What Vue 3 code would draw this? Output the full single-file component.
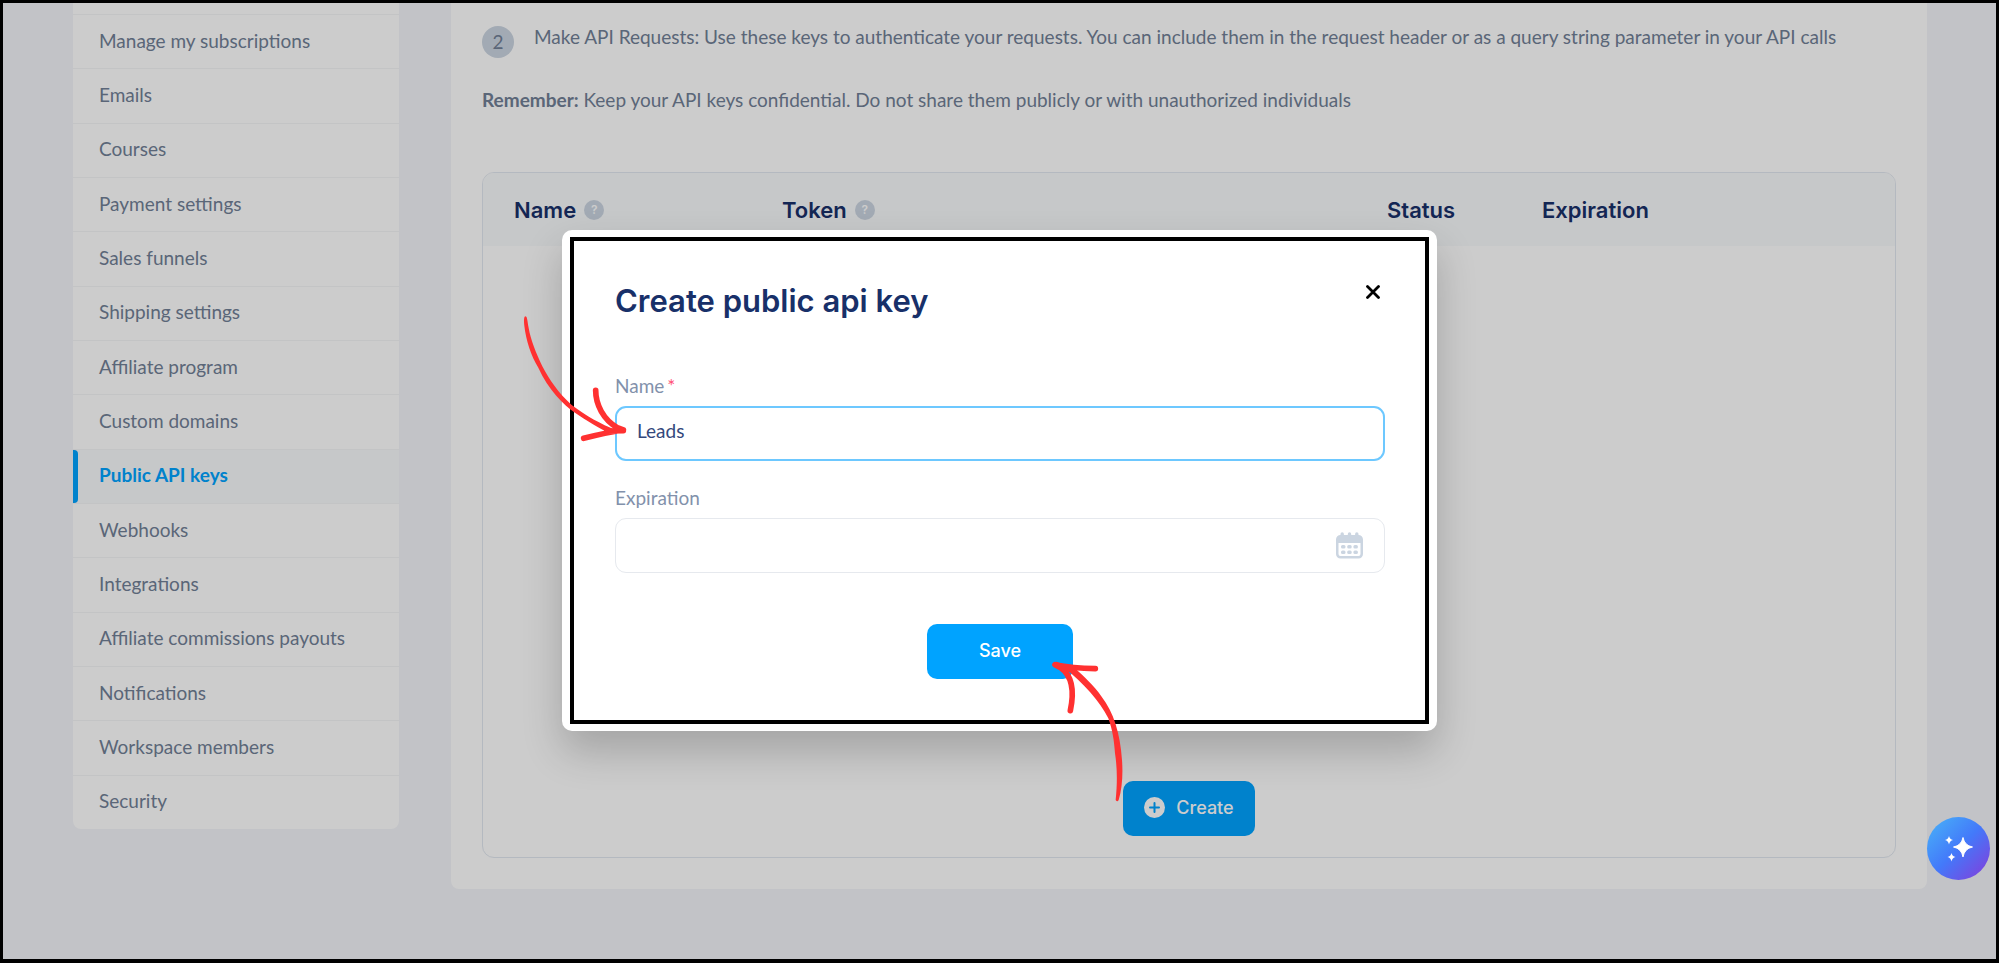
<template>
  <div class="page">
    <div class="layout">
      <nav class="sidebar" aria-label="Settings">
        <div class="sidebar-top"></div>
        <a
          v-for="item in menu"
          :key="item"
          href="#"
          class="sidebar-link"
          :class="{ active: item === current }"
          @click.prevent="current = item"
        >{{ item }}</a>
      </nav>

      <main class="panel">
        <div class="step">
          <span class="step-number">2</span>
          <p>Make API Requests: Use these keys to authenticate your requests. You can include them in the request header or as a query string parameter in your API calls</p>
        </div>
        <p class="remember"><strong>Remember:</strong> Keep your API keys confidential. Do not share them publicly or with unauthorized individuals</p>

        <div class="keys">
          <table class="keys-table">
            <thead>
              <tr>
                <th v-for="col in columns" :key="col.label" :class="col.class">
                  <span class="th-inner">
                    {{ col.label }}
                    <span v-if="col.help" class="help">?</span>
                  </span>
                </th>
              </tr>
            </thead>
          </table>
          <div class="keys-empty"></div>
          <button type="button" class="btn btn-create" @click="open = true">
            <svg width="21" height="21" viewBox="0 0 21 21">
              <circle cx="10.5" cy="10.5" r="10.5" fill="#fff" />
              <path d="M10.5 6v9M6 10.5h9" stroke="#00a3ff" stroke-width="2" stroke-linecap="round" />
            </svg>
            Create
          </button>
        </div>
      </main>
    </div>

    <div v-if="open" class="overlay">
      <form class="modal" role="dialog" aria-labelledby="modal-title" @submit.prevent="open = false">
        <div class="modal-body">
          <header class="modal-header">
            <h2 id="modal-title">Create public api key</h2>
            <button type="button" class="close" aria-label="Close" @click="open = false">
              <svg width="14" height="14" viewBox="0 0 14 14">
                <path d="M1.5 1.5l11 11M12.5 1.5l-11 11" stroke="#000" stroke-width="2.8" stroke-linecap="round" />
              </svg>
            </button>
          </header>

          <label for="key-name">Name<span class="required">*</span></label>
          <div class="field focused">
            <input id="key-name" v-model="name" type="text" />
          </div>

          <label for="key-expiration">Expiration</label>
          <div class="field">
            <input id="key-expiration" v-model="expiration" type="text" />
            <svg width="27" height="27" viewBox="0 0 27 27">
              <path
                fill="#cbd5e1"
                fill-rule="evenodd"
                d="M4.5 3V2a1.700 1.700 0 0 1 3.400 0v1h3.900V2a1.700 1.700 0 0 1 3.400 0v1h3.900V2a1.700 1.700 0 0 1 3.400 0v1A4.500 4.500 0 0 1 27 7.500V22a4.500 4.500 0 0 1-4.500 4.500h-18A4.500 4.500 0 0 1 0 22V7.500A4.500 4.500 0 0 1 4.500 3zM2.500 11v11a2 2 0 0 0 2 2h18a2 2 0 0 0 2-2V11z"
              />
              <g fill="#cbd5e1">
                <rect x="5" y="13" width="4.5" height="3.5" rx="1.5" />
                <rect x="11.2" y="13" width="4.5" height="3.5" rx="1.5" />
                <rect x="17.4" y="13" width="4.5" height="3.5" rx="1.5" />
                <rect x="5" y="18.5" width="4.5" height="3.5" rx="1.5" />
                <rect x="11.2" y="18.5" width="4.5" height="3.5" rx="1.5" />
                <rect x="17.4" y="18.5" width="4.5" height="3.5" rx="1.5" />
              </g>
            </svg>
          </div>

          <button type="submit" class="btn btn-save">Save</button>
        </div>

        <svg class="arrow arrow-name" width="110" height="130" viewBox="60 280 330 390">
          <path fill="#ff3131" d="M77 290C72 290 71 300 73 318C78 362 93 408 115 444C145 510 190 555 225 579C260 604 300 625 325 640L350 632C300 612 260 590 215 556C175 520 148 480 127 440C108 400 92 360 86 325C82 304 82 292 77 290Z" />
          <path fill="none" stroke="#ff3131" stroke-width="17" stroke-linecap="round" stroke-linejoin="round" d="M287 512C287 555 310 600 352 624L370 631C330 637 290 646 251 656M320 634L370 633" />
        </svg>
        <svg class="arrow arrow-save" width="75" height="145" viewBox="150 180 225 435">
          <path fill="#ff3131" d="M195 205C250 250 300 305 325 355C338 392 342 420 345 460C352 505 352 550 347 600Q352 608 356 600C367 565 369 520 366 480C361 400 340 335 305 290C280 255 250 228 225 205Z" />
          <path fill="none" stroke="#ff3131" stroke-width="17" stroke-linecap="round" stroke-linejoin="round" d="M211 332C222 280 220 230 182 203L165 194C205 202 245 205 286 206M170 194L210 206" />
        </svg>
      </form>
    </div>

    <button type="button" class="assistant" aria-label="Assistant">
      <svg width="28" height="26" viewBox="0 0 28 26" fill="#fff">
        <path d="M18 1.500Q19.500 9.500 27.500 11Q19.500 12.500 18 21Q16.500 12.500 8.500 11Q16.500 9.500 18 1.500Z" stroke="#fff" stroke-linejoin="round" />
        <path d="M4 0Q4.800 3.500 8 4Q4.800 4.800 4 8.500Q3.200 4.800 0 4Q3.200 3.500 4 0Z" />
        <path d="M6.500 17Q7.300 20.300 10.500 21Q7.300 21.700 6.500 25.500Q5.700 21.700 2.500 21Q5.700 20.300 6.500 17Z" />
      </svg>
    </button>
  </div>
</template>

<script setup>
import { ref } from 'vue'

const menu = [
  'Manage my subscriptions',
  'Emails',
  'Courses',
  'Payment settings',
  'Sales funnels',
  'Shipping settings',
  'Affiliate program',
  'Custom domains',
  'Public API keys',
  'Webhooks',
  'Integrations',
  'Affiliate commissions payouts',
  'Notifications',
  'Workspace members',
  'Security'
]

const columns = [
  { label: 'Name', help: true, class: 'col-name' },
  { label: 'Token', help: true, class: 'col-token' },
  { label: 'Status', class: 'col-status' },
  { label: 'Expiration', class: 'col-expiration' }
]

const current = ref('Public API keys')
const open = ref(true)
const name = ref('Leads')
const expiration = ref('')
</script>

<style>
body {
  margin: 0;
}

*,
*:before,
*:after {
  box-sizing: border-box;
}
</style>

<style scoped>
.page {
  position: relative;
  min-height: 100vh;
  border: 3px solid #000;
  border-bottom-width: 4px;
  background: #f3f4f9;
  color: #718096;
  font-family: Lato, "Open Sans", sans-serif;
  font-size: 19px;
  line-height: 24px;
}

p {
  margin: 0;
}

.layout {
  display: grid;
  grid-template-columns: 326px 1fr;
  gap: 52px;
  padding: 0 69px 0 70px;
}

/* Sidebar */
.sidebar {
  display: flex;
  flex-direction: column;
  margin-bottom: 60px;
  overflow: hidden;
  background: #fff;
  border-radius: 0 0 8px 8px;
}

.sidebar-top {
  height: 12px;
  border-bottom: 1px solid #f4f5f7;
}

.sidebar-link {
  position: relative;
  display: flex;
  flex: 1;
  align-items: center;
  padding: 0 26px 2px;
  border-bottom: 1px solid #f4f5f7;
  color: inherit;
  text-decoration: none;
}

.sidebar-link:last-child {
  border-bottom: 0;
}

.sidebar-link.active {
  background: #f8fafc;
  color: #00a3ff;
  font-weight: 700;
}

.sidebar-link.active::before {
  content: "";
  position: absolute;
  inset: 0 auto 0 0;
  width: 5px;
  background: #00a3ff;
  border-radius: 0 4px 4px 0;
}

/* Main panel */
.panel {
  padding: 20px 31px 31px;
  background: #fff;
  border-radius: 0 0 8px 8px;
}

.step {
  display: flex;
  gap: 20px;
}

.step-number {
  display: flex;
  flex: none;
  align-items: center;
  justify-content: center;
  width: 32px;
  height: 32px;
  margin-top: 3px;
  border-radius: 50%;
  background: #cbd5e1;
}

.step p {
  padding-top: 2px;
}

.remember {
  margin-top: 30px;
}

.keys {
  display: flex;
  flex-direction: column;
  margin-top: 60px;
  padding-bottom: 21px;
  overflow: hidden;
  border: 1px solid #e2e8f0;
  border-radius: 12px;
}

.keys-table {
  width: 100%;
  table-layout: fixed;
  border-collapse: collapse;
  background: #f8fafc;
}

th {
  height: 73px;
  padding: 0 0 0 31px;
  color: #183069;
  font-family: Inter, sans-serif;
  font-size: 22px;
  font-weight: 600;
  text-align: left;
}

.col-name {
  width: 268px;
}

.col-token {
  width: 605px;
}

.col-status {
  width: 155px;
}

.th-inner {
  display: flex;
  align-items: center;
  gap: 8px;
}

.help {
  display: flex;
  align-items: center;
  justify-content: center;
  width: 20px;
  height: 20px;
  border-radius: 50%;
  background: #cbd5e1;
  color: #fff;
  font-size: 12px;
}

.keys-empty {
  height: 535px;
}

.btn {
  display: flex;
  align-items: center;
  justify-content: center;
  align-self: center;
  gap: 11px;
  height: 55px;
  padding: 0 21px 2px;
  border: 0;
  border-radius: 10px;
  background: #00a3ff;
  color: #fff;
  font-family: Inter, sans-serif;
  font-size: 18px;
  font-weight: 500;
  cursor: pointer;
}

/* Modal */
.overlay {
  position: absolute;
  inset: 0;
  display: flex;
  align-items: center;
  justify-content: center;
  padding-bottom: 2px;
  background: rgba(0, 0, 0, 0.2);
}

.modal {
  position: relative;
  width: 875px;
  padding: 7px 8px;
  background: #fff;
  border-radius: 10px;
  box-shadow: 0 20px 40px rgba(0, 0, 0, 0.2);
}

.modal-body {
  display: flex;
  flex-direction: column;
  padding: 40px 40px 41px 41px;
  border: 4px solid #000;
}

.modal-header {
  display: flex;
  align-items: flex-start;
  justify-content: space-between;
  margin-bottom: 53px;
}

h2 {
  margin: 0;
  color: #183069;
  font-family: Inter, sans-serif;
  font-size: 31px;
  font-weight: 600;
  line-height: 40px;
}

.close {
  display: flex;
  padding: 4px 5px;
  border: 0;
  background: none;
  cursor: pointer;
}

label {
  margin-bottom: 8px;
  color: #8291ab;
}

.required {
  margin-left: 3px;
  color: #ff4d73;
}

.field {
  display: flex;
  align-items: center;
  height: 55px;
  margin-bottom: 25px;
  padding: 0 21px;
  border: 1px solid #e6e9ee;
  border-radius: 11px;
}

.field.focused {
  padding: 0 20px;
  border: 2px solid #6dc8ff;
}

.field input {
  flex: 1;
  min-width: 0;
  height: 40px;
  padding: 0 0 5px;
  border: 0;
  outline: none;
  background: none;
  color: #34487c;
  font: inherit;
}

.btn-save {
  width: 146px;
  margin-top: 26px;
}

.arrow {
  position: absolute;
  pointer-events: none;
}

.arrow-name {
  top: 83px;
  left: -42px;
}

.arrow-save {
  top: 430px;
  left: 488px;
}

/* Floating assistant button */
.assistant {
  position: absolute;
  right: 6px;
  bottom: 79px;
  display: flex;
  align-items: center;
  justify-content: center;
  width: 63px;
  height: 63px;
  padding: 0;
  border: 0;
  border-radius: 50%;
  background: linear-gradient(135deg, #47a9f8 10%, #4379fa 50%, #8040dc 95%);
  cursor: pointer;
}
</style>
